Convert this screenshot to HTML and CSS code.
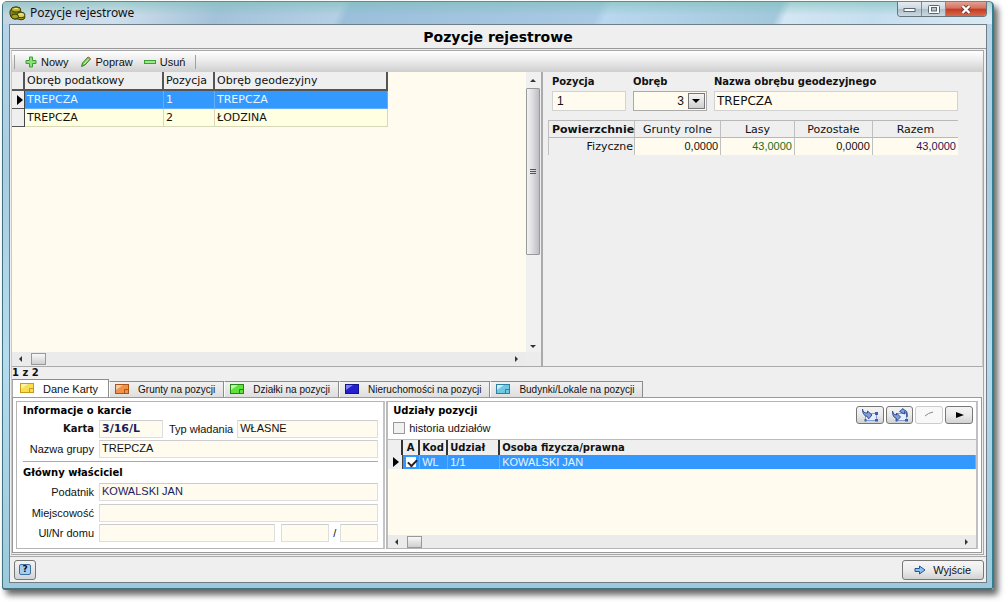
FILE: index.html
```html
<!DOCTYPE html>
<html lang="pl">
<head>
<meta charset="utf-8">
<title>Pozycje rejestrowe</title>
<link rel="stylesheet" href="styles.css">
</head>
<body>
<div class="window">
  <header class="titlebar">
    <svg class="app-icon" width="17" height="15" viewBox="0 0 17 15">
      <g stroke="#3a3f08" stroke-width="1">
        <path d="M1 5l2-3 4-1 4 1 1 4-1 3-2 4-4 0-3-2-1-3z" fill="#7d8412"/>
        <ellipse cx="7" cy="3.500" rx="4.500" ry="2.500" fill="#b9b02a"/>
        <ellipse cx="12" cy="11" rx="4" ry="2.800" fill="#a89a1a"/>
        <ellipse cx="12" cy="9" rx="4" ry="2.800" fill="#dcd458"/>
        <ellipse cx="6" cy="10.500" rx="3.500" ry="2.500" fill="#a5a31f"/>
      </g>
      <path d="M5 3q2-1.200 4 0M10.500 8.500q1.500-1 3 0" stroke="#f4f0a0" fill="none"/>
    </svg>
    <span class="window-title">Pozycje rejestrowe</span>
    <div class="window-buttons">
      <button class="wb wb-min" aria-label="Minimalizuj"><svg width="13" height="8" viewBox="0 0 13 8"><rect x="1" y="3.500" width="11" height="3" fill="#fff" stroke="#5b6670"/></svg></button>
      <button class="wb wb-max" aria-label="Maksymalizuj"><svg width="12" height="9" viewBox="0 0 12 9"><rect x=".5" y=".5" width="11" height="8" rx="1" fill="#fff" stroke="#5b6670"/><rect x="3.500" y="2.500" width="5" height="3.500" fill="#b8c6d2" stroke="#5b6670"/></svg></button>
      <button class="wb wb-close" aria-label="Zamknij"><svg width="12" height="9" viewBox="0 0 12 9"><path d="M2.500 1l7 7M9.500 1l-7 7" stroke="#6b3a36" stroke-width="4"/><path d="M2.500 1l7 7M9.500 1l-7 7" stroke="#fff" stroke-width="2.400"/></svg></button>
    </div>
  </header>

  <main class="client">
    <h1 class="heading">Pozycje rejestrowe</h1>
    <div class="workspace">
      <div class="toolbar">
        <button class="tool"><svg width="12" height="12" viewBox="0 0 12 12"><path d="M4.500 1h3v3.500H11v3H7.500V11h-3V7.500H1v-3h3.500z" fill="#8be07c" stroke="#3d9e33"/></svg>Nowy</button>
        <button class="tool"><svg width="12" height="12" viewBox="0 0 12 12"><path d="M1.500 10.500l1-3.500 5.500-6 2.500 2-5.500 6z" fill="#7cc962" stroke="#3c7f2c"/><path d="M8 1l2.500 2" stroke="#d8694f" stroke-width="1.500"/><path d="M4 8l4.500-5" stroke="#d7f5c8"/></svg>Popraw</button>
        <button class="tool"><svg width="12" height="12" viewBox="0 0 12 12"><rect x=".5" y="4.500" width="11" height="3" fill="#9be98c" stroke="#3d9e33"/></svg>Usuń</button>
      </div>

      <div class="upper">
        <section class="list">
          <div class="list-view">
            <table class="grid positions">
              <colgroup><col class="c-mark"><col class="c-tax"><col class="c-pos"><col class="c-geo"></colgroup>
              <thead><tr><th></th><th>Obręb podatkowy</th><th>Pozycja</th><th>Obręb geodezyjny</th></tr></thead>
              <tbody>
                <tr class="selected"><td class="mark"><span class="tri"></span></td><td>TREPCZA</td><td>1</td><td>TREPCZA</td></tr>
                <tr><td class="mark"></td><td>TREPCZA</td><td>2</td><td>ŁODZINA</td></tr>
              </tbody>
            </table>
          </div>
          <div class="vscroll">
            <span class="arrow up"></span>
            <div class="vtrack"><div class="vthumb"><i></i><i></i><i></i></div></div>
            <span class="arrow down"></span>
          </div>
          <div class="hscroll"><span class="arrow left"></span><span class="hthumb"></span><span class="arrow right"></span></div>
        </section>

        <section class="details">
          <div class="fields">
            <div class="field"><label for="poz">Pozycja</label><input id="poz" value="1"></div>
            <div class="field"><label for="obr">Obręb</label>
              <div class="combo"><select id="obr"><option>3</option></select><span class="combo-arrow"></span></div></div>
            <div class="field"><label for="naz">Nazwa obrębu geodezyjnego</label><input id="naz" class="large" value="TREPCZA"></div>
          </div>
          <table class="areas">
            <colgroup><col class="a1"><col class="a2"><col class="a3"><col class="a4"><col class="a5"></colgroup>
            <thead><tr><th>Powierzchnie</th><th>Grunty rolne</th><th>Lasy</th><th>Pozostałe</th><th>Razem</th></tr></thead>
            <tbody><tr><th>Fizyczne</th><td>0,0000</td><td class="green">43,0000</td><td>0,0000</td><td class="navy">43,0000</td></tr></tbody>
          </table>
        </section>
      </div>

      <div class="counter">1 z 2</div>

      <div class="tabs" role="tablist">
        <button class="tab active" role="tab" aria-selected="true"><svg width="14" height="10" viewBox="0 0 14 10"><rect x=".5" y=".5" width="13" height="9" fill="#f8df52" stroke="#c99a1c"/><path d="M1 1h7L1 6z" fill="#fdf3a8"/><path d="M9.500 9V5.500H13" fill="none" stroke="#c99a1c"/></svg>Dane Karty</button>
        <button class="tab" role="tab"><svg width="14" height="10" viewBox="0 0 14 10"><rect x=".5" y=".5" width="13" height="9" fill="#f0924a" stroke="#a95418"/><path d="M1 1h7L1 6z" fill="#fbcba2"/><path d="M9.500 9V5.500H13" fill="none" stroke="#a95418"/></svg>Grunty na pozycji</button>
        <button class="tab" role="tab"><svg width="14" height="10" viewBox="0 0 14 10"><rect x=".5" y=".5" width="13" height="9" fill="#5fe23c" stroke="#23851a"/><path d="M1 1h7L1 6z" fill="#bdf7a0"/><path d="M9.500 9V5.500H13" fill="none" stroke="#23851a"/></svg>Działki na pozycji</button>
        <button class="tab" role="tab"><svg width="14" height="10" viewBox="0 0 14 10"><rect x=".5" y=".5" width="13" height="9" fill="#2420d0" stroke="#14148a"/><path d="M1 1h7L1 6z" fill="#8184f0"/></svg>Nieruchomości na pozycji</button>
        <button class="tab" role="tab"><svg width="14" height="10" viewBox="0 0 14 10"><rect x=".5" y=".5" width="13" height="9" fill="#6fc8e4" stroke="#2f7f9e"/><path d="M1 1h7L1 6z" fill="#c8eef8"/><path d="M9.500 9V5.500H13" fill="none" stroke="#2f7f9e"/></svg>Budynki/Lokale na pozycji</button>
      </div>

      <div class="tab-page">
        <section class="card">
          <h2>Informacje o karcie</h2>
          <div class="row"><label class="cap strong" for="karta">Karta</label><input id="karta" class="w-card strong navy" value="3/16/L"><label for="typ">Typ władania</label><input id="typ" class="grow" value="WŁASNE"></div>
          <div class="row"><label class="cap" for="grupa">Nazwa grupy</label><input id="grupa" class="grow" value="TREPCZA"></div>
          <hr>
          <h2>Główny właściciel</h2>
          <div class="row tall"><label class="cap" for="pod">Podatnik</label><input id="pod" class="grow navy" value="KOWALSKI JAN"></div>
          <div class="row tall"><label class="cap" for="miej">Miejscowość</label><input id="miej" class="grow"></div>
          <div class="row"><label class="cap" for="ul">Ul/Nr domu</label><input id="ul" class="grow"><input class="w-house" aria-label="Nr domu"><span class="slash">/</span><input class="w-flat" aria-label="Nr lokalu"></div>
        </section>

        <section class="shares">
          <div class="shares-head">
            <div class="shares-title">
              <h2>Udziały pozycji</h2>
              <label class="check"><input type="checkbox"> historia udziałów</label>
            </div>
            <div class="shares-tools">
              <button class="mini" aria-label="Wstaw"><svg width="18" height="14" viewBox="0 0 18 14"><path d="M4.500 5.500h11v7h-11z" fill="#e6eefb" stroke="#86a0d4"/><path d="M14 4h3v3h-3zM14 11h3v2.500h-3zM3.500 11h2v2.500h-2z" fill="#3f5fae"/><path d="M1.500 1q0 4 5 4V3L11 7l-3.500 4-1-2.500Q1.500 8 1.500 1z" fill="#7f9fd8" stroke="#34529c"/></svg></button>
              <button class="mini narrow" aria-label="Zamień"><svg width="18" height="14" viewBox="0 0 18 14"><path d="M5.500 5.500h10v7h-10z" fill="#e6eefb" stroke="#86a0d4"/><path d="M14 11h3v2.500h-3zM4.500 11h2v2.500h-2z" fill="#3f5fae"/><path d="M1.500 3q0 4 4 4V5l4 4-3.500 3.500-1-2.500Q1.500 9.500 1.500 3zM16 9q0-5-2.500-5.500V6L8.500 3.500 12 .5l1 1.500q4 0 3 7z" fill="#7f9fd8" stroke="#34529c"/></svg></button>
              <button class="mini off" aria-label="Edytuj" disabled><svg width="18" height="14" viewBox="0 0 18 14"><path d="M5 8q3-3 8-4" fill="none" stroke="#888"/></svg></button>
              <button class="mini" aria-label="Dalej"><svg width="18" height="14" viewBox="0 0 18 14"><path d="M6 4l8 3-8 3z" fill="#000"/></svg></button>
            </div>
          </div>
          <div class="shares-view">
            <table class="grid owners">
              <colgroup><col class="o-mark"><col class="o-a"><col class="o-kod"><col class="o-udz"><col></colgroup>
              <thead><tr><th></th><th class="mid">A</th><th>Kod</th><th>Udział</th><th>Osoba fizycza/prawna</th></tr></thead>
              <tbody><tr class="selected"><td class="mark"><span class="tri"></span></td><td class="mid"><input type="checkbox" checked aria-label="Aktywny"></td><td>WL</td><td>1/1</td><td>KOWALSKI JAN</td></tr></tbody>
            </table>
          </div>
          <div class="hscroll"><span class="arrow left"></span><span class="hthumb"></span><span class="arrow right"></span></div>
        </section>
      </div>
    </div>

    <footer class="footer">
      <button class="help" aria-label="Pomoc"><span>?</span></button>
      <button class="exit"><svg width="12" height="10" viewBox="0 0 12 10"><path d="M1 3.500h4.500V1L11 5 5.500 9V6.500H1z" fill="#8fc0ee" stroke="#22579c"/></svg>Wyjście</button>
    </footer>
  </main>
</div>
</body>
</html>
```
FILE: styles.css
```css
* { box-sizing: border-box; }

body {
  margin: 0;
  padding: 1px 14px 12px 2px;
  min-height: 100vh;
  display: flex;
  background: #fff;
  color: #111;
  font: 11px/14px "Liberation Sans", Arial, sans-serif;
}

button, input, select { font: inherit; color: inherit; }
h1, h2 { margin: 0; }

.window {
  flex: 1;
  min-width: 0;
  display: flex;
  flex-direction: column;
  padding: 0 5px 5px 6px;
  border: 1px solid #3f7380;
  border-top-color: #6d8686;
  border-bottom: 2px solid #44727f;
  border-right: 2px solid #2f7f90;
  border-radius: 5px 5px 3px 3px;
  background: linear-gradient(180deg, #b9d4e8 0, #a9cde2 30%, #b5dcee 60%, #9cc9dc 100%);
  box-shadow: 4px 5px 6px rgba(0, 0, 0, .6);
}

.titlebar {
  display: flex;
  align-items: flex-start;
  height: 22px;
  margin: 0 -5px 0 -6px;
  padding-left: 6px;
  border-radius: 4px 4px 0 0;
  background:
    linear-gradient(180deg, rgba(120, 190, 180, .55) 0, rgba(255, 255, 255, 0) 60%),
    linear-gradient(115deg, #c3d3e2 0, #cfdfec 12%, #a3c2d9 22%, #b3cfe4 34%, #9bbfdb 35%, #a9c9e4 60%, #b9d7ee 61%, #a3c8dc 78%, #d3e6f3 79%, #c5deee 88%, #dbeaf3 100%);
}
.app-icon { margin-top: 4px; }
.window-title { margin-left: 4px; padding-top: 4px; font: 12px/14px "Noto Sans", sans-serif; }
.window-buttons {
  display: flex;
  margin-left: auto;
  margin-right: 5px;
  border: 1px solid #65747f;
  border-top: 0;
  border-radius: 0 0 4px 4px;
  overflow: hidden;
}
.wb {
  display: grid;
  place-items: center;
  width: 24px;
  height: 14px;
  padding: 0;
  border: 0;
  border-right: 1px solid #7d8b95;
  background: linear-gradient(#e4ecf1 0, #cbd8e0 48%, #aebfca 50%, #cbd9e2 100%);
}
.wb-close { width: 40px; border-right: 0; background: linear-gradient(#e3a193 0, #d4705c 45%, #c23a22 50%, #d9694c 100%); }

.client {
  flex: 1;
  display: flex;
  flex-direction: column;
  border: 1px solid #6f7d86;
  background: #efefef;
}
.heading {
  height: 24px;
  border-bottom: 1px solid #999;
  text-align: center;
  font: bold 14px/24px "DejaVu Sans", sans-serif;
  color: #000;
}
.workspace {
  flex: 1;
  display: flex;
  flex-direction: column;
  margin: 1px 2px 0 1px;
  border: 1px solid #a8a8a8;
  border-left-color: #c9c9c9;
}

.toolbar {
  display: flex;
  align-items: center;
  height: 21px;
  padding: 0 2px;
  background: linear-gradient(#fff 0, #ececec 45%, #cfcfcf 100%);
}
.toolbar::before, .toolbar::after { content: ""; width: 1px; height: 14px; background: #a0a0a0; }
.toolbar::before { margin-right: 8px; }
.tool {
  display: flex;
  align-items: center;
  gap: 4px;
  margin-right: 7px;
  padding: 0 2px;
  border: 0;
  background: none;
}

.upper { flex: 1; display: grid; grid-template-columns: 532fr 441fr; }
.list {
  display: grid;
  grid-template-columns: 1fr 15px;
  grid-template-rows: 1fr 14px;
  min-width: 0;
  border-right: 2px solid #aaa;
  border-bottom: 1px solid #aaa;
  background: #ececec;
}
.list-view { background: #fffbee; overflow: hidden; }
.grid { border-collapse: separate; border-spacing: 0; table-layout: fixed; }
.grid th, .grid td { padding: 0 2px; overflow: hidden; white-space: nowrap; text-align: left; }
.grid .mark { padding: 0; background: #efefef; border-right: 1px solid #444; }
.tri { display: block; width: 0; margin-left: 5px; border: 5px solid transparent; border-left: 6px solid #000; border-right: 0; }

.positions { width: 376px; font: 11px/16px "DejaVu Sans", sans-serif; }
.positions th { height: 19px; border-right: 2px solid #555; border-bottom: 2px solid #555; background: #efefef; font-weight: normal; }
.positions td { height: 18px; border-right: 1px solid #d8d8b8; border-bottom: 1px solid #d8d8b8; background: #ffffe1; }
.positions .mark { border-bottom-color: #555; }
.positions .selected td:not(.mark), .owners .selected td:not(.mark) { background: #3399ff; color: #eaf5ff; border-color: #65aff8; }
.c-mark { width: 13px; }
.c-tax { width: 139px; }
.c-pos { width: 51px; }
.c-geo { width: 173px; }

.vscroll { display: flex; flex-direction: column; align-items: center; padding: 7px 0 4px; background: #f0f0f0; }
.vtrack { flex: 1; width: 15px; padding: 6px 1px 0 0; display: flex; flex-direction: column; }
.vthumb {
  height: 65%;
  display: flex;
  flex-direction: column;
  align-items: center;
  justify-content: center;
  gap: 1px;
  border: 1px solid #999;
  border-radius: 1px;
  background: linear-gradient(90deg, #f3f3f3, #dedee0 45%, #bcbcc4);
}
.vthumb i { width: 6px; height: 1px; background: #555; }
.arrow { flex: none; width: 0; height: 0; border: 3px solid transparent; }
.up { border-bottom-color: #333; border-top: 0; }
.down { border-top-color: #333; border-bottom: 0; }
.left { border-right-color: #333; border-left: 0; }
.right { border-left-color: #333; border-right: 0; margin-left: auto; }
.hscroll { display: flex; align-items: center; height: 13px; padding: 0 8px 0 7px; background: #ebebeb; }
.hthumb { width: 15px; height: 12px; margin-left: 9px; border: 1px solid #999; background: linear-gradient(#f8f8f8, #cfcfcf); }

.details { padding: 3px 24px 0 5px; border-bottom: 1px solid #aaa; border-right: 1px solid #ccc; }
.fields { display: grid; grid-template-columns: 74px 74px 1fr; gap: 7px; padding-left: 4px; }
.field label { display: block; height: 16px; font: bold 10px/14px "DejaVu Sans", sans-serif; white-space: nowrap; }
.field input, .combo { width: 100%; height: 20px; padding: 0 4px; border: 1px solid #d2d2d2; background: #fffbee; font: 12px/18px "Liberation Sans", Arial, sans-serif; }
.field input.large { padding: 0 2px; font: 12px/18px "DejaVu Sans", sans-serif; }
.combo { display: flex; padding: 0; border-color: #aaa; }
.combo select { flex: 1; min-width: 0; padding: 0 3px 0 0; border: 0; background: none; appearance: none; text-align: right; text-align-last: right; }
.combo-arrow { display: grid; place-items: center; width: 17px; margin: 1px; border: 1px solid #777; background: linear-gradient(#f5f5f5, #cfcfcf); }
.combo-arrow::after { content: ""; border: 4px solid transparent; border-top-color: #000; border-bottom: 0; }

.areas { width: 100%; margin-top: 9px; border-collapse: separate; border-spacing: 0; table-layout: fixed; font: 11px/15px "DejaVu Sans", sans-serif; }
.areas th, .areas td { height: 17px; padding: 0 2px; border-left: 1px solid #c0c0c0; border-top: 1px solid #b8b8b8; white-space: nowrap; }
.areas thead th { font-weight: normal; text-align: center; }
.areas thead th:first-child { padding: 0 0 0 3px; font-weight: bold; font-size: 11px; text-align: left; }
.areas tbody th { font-weight: normal; text-align: right; padding-right: 1px; }
.areas td { height: 18px; background: #fffbee; text-align: right; font-family: "Liberation Sans", Arial, sans-serif; }
.areas .green { color: #18701c; }
.navy { color: #1a1a5c; }
.a1 { width: 21%; }
.a2 { width: 21%; }
.a3 { width: 18%; }
.a4 { width: 19%; }

.counter { height: 12px; font: bold 10px/12px "DejaVu Sans", sans-serif; }
.tabs { display: flex; align-items: flex-end; height: 18px; }
.tab {
  display: flex;
  align-items: center;
  gap: 9px;
  height: 16px;
  padding: 1px 8px 0 5px;
  border: 1px solid #8c8c8c;
  border-left-color: #fff;
  border-bottom: 0;
  background: linear-gradient(#f2f2f2, #dedede);
  font-size: 10px;
  white-space: nowrap;
}
.tab.active { height: 18px; padding: 0 10px 0 7px; border-left-color: #aaa; background: #fff; font-size: 11px; }
.tab svg { margin-bottom: 2px; }

.tab-page {
  display: grid;
  grid-template-columns: 370fr 593fr;
  gap: 1px;
  height: 156px;
  margin: 0 1px 1px 0;
  padding: 3px 3px 3px;
  border: 1px solid #999;
  background: #fff;
}
.card { min-width: 0; padding: 2px 5px 0 6px; border: 1px solid #b5b5b5; border-right: 2px solid #c4c4c4; }
h2 { font: bold 10px/14px "DejaVu Sans", sans-serif; color: #000; }
.row { display: flex; align-items: center; height: 20px; }
.card h2 + .row { margin-top: 1px; }
.row.tall { height: 21px; }
.row input { min-width: 0; height: 18px; padding: 0 2px 2px; border: 1px solid #dedede; border-top-color: #ccc; background: #fffbee; }
.row label { white-space: nowrap; }
.cap { width: 76px; padding-right: 5px; text-align: right; }
.grow { flex: 1; }
.strong { font: bold 11px/14px "DejaVu Sans", sans-serif; }
.row label.strong { font-size: 10px; }
.w-card { width: 64px; margin-right: 6px; }
.w-card ~ .grow { margin-left: 4px; }
.w-house { width: 48px; margin-left: 6px; }
.slash { padding: 0 4px; }
.w-flat { width: 38px; }
hr { width: 100%; height: 1px; margin: 2px 0 4px; border: 0; background: #aaa; }

.shares { display: flex; flex-direction: column; min-width: 0; border: 1px solid #b5b5b5; border-right: 2px solid #c0c0c0; border-left: 2px solid #bbb; }
.shares-head { display: flex; justify-content: space-between; height: 37px; padding: 2px 3px 0 5px; }
.check { display: flex; align-items: center; gap: 4px; height: 19px; }
input[type=checkbox] { appearance: none; width: 12px; height: 12px; margin: 0; border: 1px solid #999; background: #f1f1f1; }
.shares-tools { display: flex; gap: 2px; height: 18px; margin-top: 2px; }
.mini { display: grid; place-items: center; width: 28px; padding: 0; border: 1px solid #777; border-radius: 3px; background: linear-gradient(#f4f4f4 0, #ebebeb 50%, #d2d2d2 100%); }
.mini.narrow { width: 27px; }
.mini.off { border-color: #ccc; background: #f8f8f8; }
.shares-view { flex: 1; overflow: hidden; border-top: 1px solid #bbb; background: #fffbee; }
.owners { width: 100%; }
.owners th { height: 15px; border-right: 2px solid #333; background: #efefef; font: bold 10px/15px "DejaVu Sans", sans-serif; }
.owners th:last-child { border-right: 0; }
.owners td { height: 14px; border-right: 1px solid; line-height: 13px; }
.owners .mid { padding: 0; text-align: center; }
.owners td input { display: block; margin: 0 auto; width: 10px; height: 10px; border: 1px solid #fff; background: #fff; }
.owners td input:checked::before { content: ""; display: block; width: 7px; height: 4px; margin: 1px 0 0 1px; border: solid #222; border-width: 0 0 2px 2px; transform: rotate(-45deg); }
.o-mark { width: 15px; }
.o-a { width: 17px; }
.o-kod { width: 28px; }
.o-udz { width: 52px; }

.footer { display: flex; align-items: center; justify-content: space-between; height: 26px; margin-top: 1px; padding: 0 2px 0 4px; border-top: 1px solid #a8a8a8; }
.help { display: grid; place-items: center; width: 22px; height: 20px; padding: 0; border: 1px solid #777; border-radius: 3px; background: linear-gradient(#f4f4f4, #d0d4da); }
.help span { width: 12px; height: 11px; border: 1px solid #3d6f9f; border-radius: 2px; background: #a5cdf0; font: bold 9px/9px "DejaVu Sans", sans-serif; }
.exit { display: flex; align-items: center; justify-content: flex-end; gap: 7px; width: 82px; height: 20px; padding: 0 12px 0 0; border: 1px solid #777; border-radius: 3px; background: linear-gradient(#f6f6f6 0, #ececec 50%, #d2d2d2 100%); }
```
